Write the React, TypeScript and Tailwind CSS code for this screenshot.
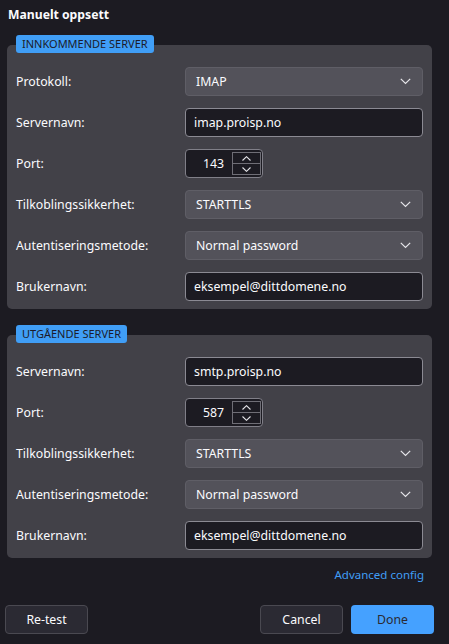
import React from "react";

const Chevron = () => (
  <svg width="11" height="7" viewBox="0 0 11 7" fill="none">
    <path d="M0.8 0.8L5.5 5.5L10.2 0.8" stroke="#e6e6ea" strokeWidth="1.2" />
  </svg>
);

const SmallUp = () => (
  <svg width="9" height="5" viewBox="0 0 9 5" fill="none">
    <path d="M0.5 4.5L4.5 0.7L8.5 4.5" stroke="#e6e6ea" strokeWidth="1.1" />
  </svg>
);
const SmallDown = () => (
  <svg width="9" height="5" viewBox="0 0 9 5" fill="none">
    <path d="M0.5 0.5L4.5 4.3L8.5 0.5" stroke="#e6e6ea" strokeWidth="1.1" />
  </svg>
);

function Select({ value }: { value: string }) {
  return (
    <div className="flex h-[29px] w-[238px] items-center justify-between rounded-[4px] border border-[#5f5e66] bg-[#53525a] pl-[10px] pr-[11px]">
      <span>{value}</span>
      <Chevron />
    </div>
  );
}

function Input({ value }: { value: string }) {
  return (
    <div className="flex h-[29px] w-[238px] items-center rounded-[4px] border border-[#8b8a93] bg-[#1c1b22] pl-[8px]">
      {value}
    </div>
  );
}

function Spinner({ value }: { value: string }) {
  return (
    <div className="flex h-[29px] w-[78px] rounded-[4px] border border-[#807f88] bg-[#1c1b22]">
      <div className="flex flex-1 items-center justify-end pr-[8px]">{value}</div>
      <div className="my-[2px] mr-[1px] flex w-[29px] flex-col border border-[#6f6e76]">
        <div className="flex flex-1 items-center justify-center border-b border-[#6f6e76]">
          <SmallUp />
        </div>
        <div className="flex flex-1 items-center justify-center">
          <SmallDown />
        </div>
      </div>
    </div>
  );
}

function Row({ label, children }: { label: string; children: React.ReactNode }) {
  return (
    <div className="flex h-[29px] items-center">
      <div className="w-[169px]">{label}</div>
      {children}
    </div>
  );
}

function Panel({ title, children }: { title: string; children: React.ReactNode }) {
  return (
    <div className="relative ml-[7px] w-[425px] rounded-[5px] bg-[#424148] px-[9px] pb-[8px] pt-[22px]">
      <div className="absolute left-[9px] top-[-10px] flex h-[18px] items-center rounded-[3px] bg-[#409ef6] px-[6px] text-[11px] text-[#1c1b2a]">
        {title}
      </div>
      <div className="flex flex-col gap-[12px]">{children}</div>
    </div>
  );
}

export default function App() {
  return (
    <div className="flex h-[644px] w-[449px] flex-col bg-[#1c1b22] font-['Noto_Sans','Liberation_Sans',sans-serif] text-[12.3px] leading-[18px] text-[#fbfbfe]">
      <div className="pl-[8px] pt-[6px] text-[12.2px] font-bold leading-[18px]">Manuelt oppsett</div>
      <div className="mt-[21px]">
        <Panel title="INNKOMMENDE SERVER">
          <Row label="Protokoll:">
            <Select value="IMAP" />
          </Row>
          <Row label="Servernavn:">
            <Input value="imap.proisp.no" />
          </Row>
          <Row label="Port:">
            <Spinner value="143" />
          </Row>
          <Row label="Tilkoblingssikkerhet:">
            <Select value="STARTTLS" />
          </Row>
          <Row label="Autentiseringsmetode:">
            <Select value="Normal password" />
          </Row>
          <Row label="Brukernavn:">
            <Input value="eksempel@dittdomene.no" />
          </Row>
        </Panel>
      </div>
      <div className="mt-[26px]">
        <Panel title="UTGÅENDE SERVER">
          <Row label="Servernavn:">
            <Input value="smtp.proisp.no" />
          </Row>
          <Row label="Port:">
            <Spinner value="587" />
          </Row>
          <Row label="Tilkoblingssikkerhet:">
            <Select value="STARTTLS" />
          </Row>
          <Row label="Autentiseringsmetode:">
            <Select value="Normal password" />
          </Row>
          <Row label="Brukernavn:">
            <Input value="eksempel@dittdomene.no" />
          </Row>
        </Panel>
      </div>
      <div className="mt-[8px] flex justify-end pr-[25px]">
        <span className="text-[11.5px] text-[#409ef6]">Advanced config</span>
      </div>
      <div className="mt-[21px] flex items-center justify-between pl-[5px] pr-[15px]">
        <button className="h-[29px] w-[83px] rounded-[4px] border border-[#4a4951] bg-[#2b2a33] text-[#fbfbfe]">
          Re-test
        </button>
        <div className="flex gap-[8px]">
          <button className="h-[29px] w-[83px] rounded-[4px] border border-[#4a4951] bg-[#2b2a33] text-[#fbfbfe]">
            Cancel
          </button>
          <button className="h-[29px] w-[83px] rounded-[4px] bg-[#45a1ff] text-[#2b2a33]">Done</button>
        </div>
      </div>
    </div>
  );
}
